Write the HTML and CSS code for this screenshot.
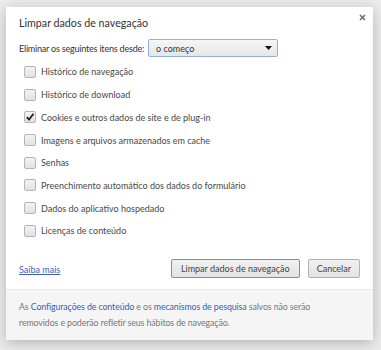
FILE: index.html
```html
<!DOCTYPE html>
<html lang="pt">
  <head>
    <meta charset="UTF-8" />
    <title>Limpar dados de navegação</title>
    <link rel="stylesheet" href="styles.css">
  </head>
  <body>
    <div class="dialog">
      <span class="close">
        <svg width="7" height="7" viewBox="0 0 7 7"><path d="M1 1L6 6M6 1L1 6" stroke="#6f6f6f" stroke-width="1.7"/></svg>
      </span>
      <div class="dialog-body">
        <h1 class="title">Limpar dados de navegação</h1>

        <div class="period-row">
          <label for="period" class="period-label">Eliminar os seguintes itens desde:</label>
          <div class="select" id="period">
            <span>o começo</span>
            <svg width="7" height="4" viewBox="0 0 7 4"><path d="M0 0H7L3.5 4Z" fill="#111"/></svg>
          </div>
        </div>

        <div class="check-list">
          <div class="check-row"><span class="checkbox"></span>Histórico de navegação</div>
          <div class="check-row"><span class="checkbox"></span>Histórico de download</div>
          <div class="check-row"><span class="checkbox checked"><svg width="10" height="10" viewBox="0 0 10 10"><path d="M1.8 5.2L4 7.6L8.5 1.8" fill="none" stroke="#222" stroke-width="1.8"/></svg></span>Cookies e outros dados de site e de plug-in</div>
          <div class="check-row"><span class="checkbox"></span>Imagens e arquivos armazenados em cache</div>
          <div class="check-row"><span class="checkbox"></span>Senhas</div>
          <div class="check-row"><span class="checkbox"></span>Preenchimento automático dos dados do formulário</div>
          <div class="check-row"><span class="checkbox"></span>Dados do aplicativo hospedado</div>
          <div class="check-row"><span class="checkbox"></span>Licenças de conteúdo</div>
        </div>

        <div class="action-row">
          <a href="#" class="link">Saiba mais</a>
          <div class="buttons">
            <button class="btn btn-default">Limpar dados de navegação</button>
            <button class="btn">Cancelar</button>
          </div>
        </div>
      </div>

      <div class="dialog-footer">
        As <a href="#" class="footer-link">Configurações de conteúdo</a> e os
        <a href="#" class="footer-link">mecanismos de pesquisa</a> salvos não serão
        removidos e poderão refletir seus hábitos de navegação.
      </div>
    </div>
  </body>
</html>
```

FILE: styles.css
```css
body {
  margin: 0;
  width: 381px;
  height: 350px;
  background-color: #ededed;
  font-family: Lato, "Open Sans", sans-serif;
  font-size: 9px;
  color: #333;
  overflow: hidden;
}
.dialog {
  position: relative;
  margin: 7px 0 0 6px;
  width: 367px;
  height: 333px;
  background: #fff;
  box-shadow: 0 3px 14px rgba(0, 0, 0, 0.25);
  display: flex;
  flex-direction: column;
}
.close {
  position: absolute;
  top: 7px;
  right: 7px;
  width: 7px;
  height: 7px;
  line-height: 0;
}
.dialog-body {
  flex: 1;
  padding: 7px 13px 0;
}
.title {
  margin: 0;
  font-size: 10.7px;
  font-weight: normal;
  line-height: 18px;
  color: #333;
}
/* Строка выбора периода */
.period-row {
  display: flex;
  align-items: center;
  gap: 4px;
  margin-top: 7px;
  height: 18px;
}
.period-label {
  letter-spacing: -0.2px;
}
.select {
  box-sizing: border-box;
  flex-shrink: 0;
  width: 130px;
  height: 18px;
  padding: 0 5px 0 7px;
  border: 1px solid #8cb1ec;
  border-radius: 2px;
  background: linear-gradient(#f6f6f6, #e6e6e6);
  display: flex;
  align-items: center;
  justify-content: space-between;
  color: #333;
}
/* Список чекбоксов */
.check-list {
  margin-top: 3.6px;
}
.check-row {
  display: flex;
  align-items: center;
  height: 22.7px;
  padding-left: 5px;
  color: #484848;
}
.checkbox {
  box-sizing: border-box;
  width: 12px;
  height: 12px;
  margin-right: 5px;
  border: 1px solid #b4b4b4;
  border-radius: 2px;
  background: linear-gradient(#f3f3f3, #e2e2e2);
  display: flex;
  align-items: center;
  justify-content: center;
}
/* Кнопки */
.action-row {
  display: flex;
  align-items: center;
  justify-content: space-between;
  margin-top: 16.7px;
  height: 20px;
}
.link {
  color: #3a62c9;
  margin-top: 2px;
}
.buttons {
  display: flex;
  gap: 8px;
}
.btn {
  box-sizing: border-box;
  height: 19px;
  padding: 0 8px;
  border: 1px solid #b0b0b0;
  border-radius: 2px;
  background: linear-gradient(#f1f1f1, #e3e3e3);
  font-family: inherit;
  font-size: 9px;
  color: #444;
}
.btn-default {
  border-color: #8c8c8c;
  padding: 0 9px;
}
/* Подвал */
.dialog-footer {
  height: 51px;
  box-sizing: border-box;
  padding: 9px 45px 0 13px;
  background-color: #f5f5f5;
  border-top: 1px solid #e8e8e8;
  color: #777;
  font-size: 8.8px;
  letter-spacing: -0.1px;
  line-height: 16px;
}
.footer-link {
  color: #3a5cb8;
  text-decoration: none;
}
```
